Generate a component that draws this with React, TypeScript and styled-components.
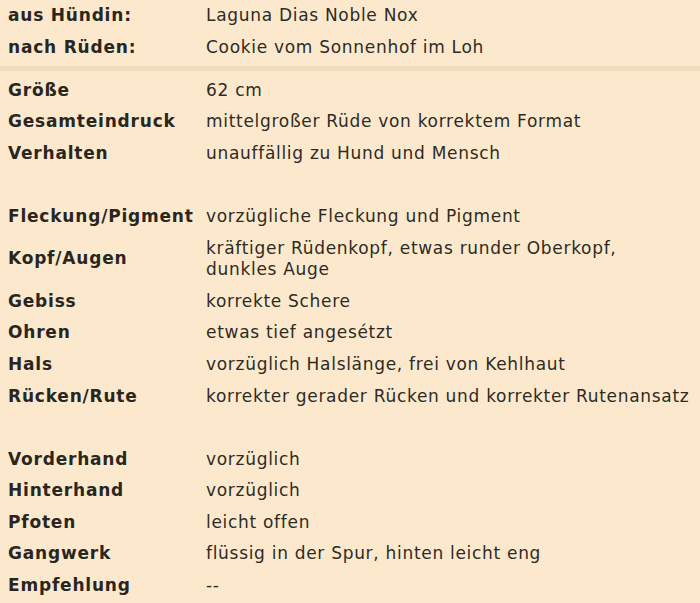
import React from 'react';
import styled, { createGlobalStyle } from 'styled-components';

type Entry = { label: string; value: React.ReactNode };

const parents: Entry[] = [
  { label: 'aus Hündin:', value: 'Laguna Dias Noble Nox' },
  { label: 'nach Rüden:', value: 'Cookie vom Sonnenhof im Loh' },
];

const groups: Entry[][] = [
  [
    { label: 'Größe', value: '62 cm' },
    { label: 'Gesamteindruck', value: 'mittelgroßer Rüde von korrektem Format' },
    { label: 'Verhalten', value: 'unauffällig zu Hund und Mensch' },
  ],
  [
    { label: 'Fleckung/Pigment', value: 'vorzügliche Fleckung und Pigment' },
    {
      label: 'Kopf/Augen',
      value: (
        <>
          kräftiger Rüdenkopf, etwas runder Oberkopf,
          <br />
          dunkles Auge
        </>
      ),
    },
    { label: 'Gebiss', value: 'korrekte Schere' },
    { label: 'Ohren', value: 'etwas tief angesétzt' },
    { label: 'Hals', value: 'vorzüglich Halslänge, frei von Kehlhaut' },
    { label: 'Rücken/Rute', value: 'korrekter gerader Rücken und korrekter Rutenansatz' },
  ],
  [
    { label: 'Vorderhand', value: 'vorzüglich' },
    { label: 'Hinterhand', value: 'vorzüglich' },
    { label: 'Pfoten', value: 'leicht offen' },
    { label: 'Gangwerk', value: 'flüssig in der Spur, hinten leicht eng' },
    { label: 'Empfehlung', value: '--' },
  ],
];

const App: React.FC = () => {
  return (
    <>
      <GlobalStyle />
      <Sheet>
        {parents.map((e) => (
          <Row key={e.label}>
            <Label>{e.label}</Label>
            <Value>{e.value}</Value>
          </Row>
        ))}
        <Separator />
        {groups.map((group, i) => (
          <React.Fragment key={i}>
            {i > 0 && <BlankRow />}
            {group.map((e) => (
              <Row key={e.label}>
                <Label>{e.label}</Label>
                <Value>{e.value}</Value>
              </Row>
            ))}
          </React.Fragment>
        ))}
      </Sheet>
    </>
  );
};

const GlobalStyle = createGlobalStyle`
  html, body {
    margin: 0;
    padding: 0;
    background: #fce9cd;
  }
`;

const Sheet = styled.div`
  width: 700px;
  height: 603px;
  box-sizing: border-box;
  background: #fce9cd;
  font-family: 'DejaVu Sans', Verdana, sans-serif;
  font-size: 17px;
  line-height: 21.6px;
  color: #2e2b25;
  overflow: hidden;
`;

const Row = styled.div`
  display: grid;
  grid-template-columns: 198px 1fr;
  align-items: center;
  padding: 5px 0 5px 8px;
`;

const Label = styled.div`
  font-weight: bold;
  letter-spacing: 0.8px;
  color: #29261f;
  white-space: nowrap;
`;

const Value = styled.div`
  letter-spacing: 0.7px;
  white-space: nowrap;
`;

const BlankRow = styled.div`
  height: 31.6px;
`;

const Separator = styled.div`
  height: 11.4px;
  display: flex;
  align-items: center;

  &::after {
    content: '';
    display: block;
    width: 100%;
    height: 5px;
    background: #eedcbd;
  }
`;

export default App;
